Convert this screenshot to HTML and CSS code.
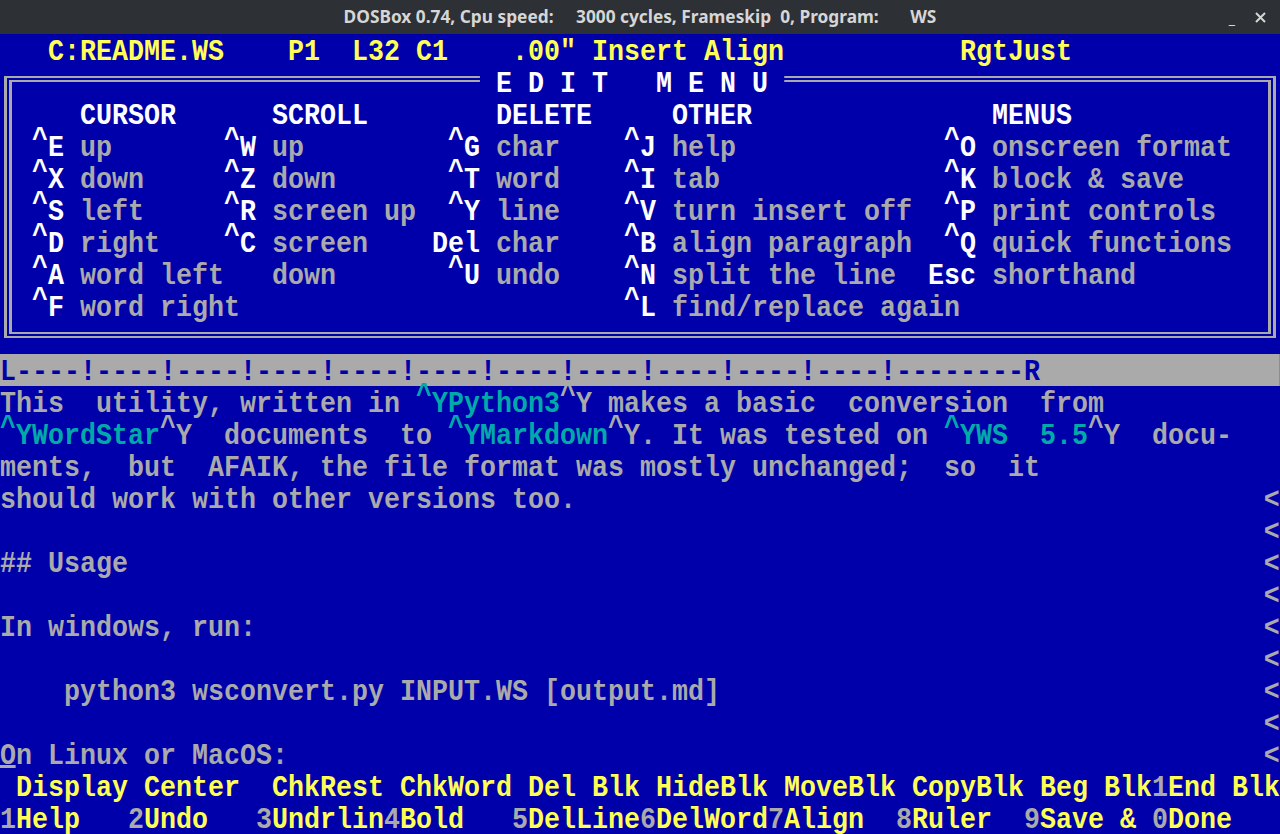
FILE: index.html
```
<!DOCTYPE html>
<html>
<head>
<meta charset="utf-8">
<title>DOSBox - WordStar</title>
<link rel="stylesheet" href="styles.css">
</head>
<body>
<div class="titlebar">
  <div class="tb-side"></div>
  <div class="tb-title">DOSBox 0.74, Cpu speed:     3000 cycles, Frameskip  0, Program:       WS</div>
  <div class="tb-side tb-buttons">
    <span class="tb-min">_</span>
    <svg class="tb-close" width="11" height="11" viewBox="0 0 11 11"><path d="M1 1L10 10M10 1L1 10" stroke="#d6d6d6" stroke-width="2" fill="none"/></svg>
  </div>
</div>
<div class="screen">
  <div class="row yel">   C:README.WS    P1  L32 C1    .00&quot; Insert Align           RgtJust</div>
  <div class="menu">
    <div class="row">                              <span class="ttl"> E D I T   M E N U </span></div>
    <div class="row wht">     CURSOR      SCROLL        DELETE     OTHER               MENUS</div>
    <div class="row">  <span class="ck">E</span> up       <span class="ck">W</span> up         <span class="ck">G</span> char    <span class="ck">J</span> help             <span class="ck">O</span> onscreen format</div>
    <div class="row">  <span class="ck">X</span> down     <span class="ck">Z</span> down       <span class="ck">T</span> word    <span class="ck">I</span> tab              <span class="ck">K</span> block &amp; save</div>
    <div class="row">  <span class="ck">S</span> left     <span class="ck">R</span> screen up  <span class="ck">Y</span> line    <span class="ck">V</span> turn insert off  <span class="ck">P</span> print controls</div>
    <div class="row">  <span class="ck">D</span> right    <span class="ck">C</span> screen    <span class="wht">Del</span> char    <span class="ck">B</span> align paragraph  <span class="ck">Q</span> quick functions</div>
    <div class="row">  <span class="ck">A</span> word left   down       <span class="ck">U</span> undo    <span class="ck">N</span> split the line  <span class="wht">Esc</span> shorthand</div>
    <div class="row">  <span class="ck">F</span> word right                        <span class="ck">L</span> find/replace again</div>
    <div class="row"> </div>
  </div>
  <div class="row ruler">L----!----!----!----!----!----!----!----!----!----!----!--------R</div>
  <div class="row">This  utility, written in <span class="cy"><span class="c">^</span>YPython3</span><span class="c">^</span>Y makes a basic  conversion  from</div>
  <div class="row"><span class="cy"><span class="c">^</span>YWordStar</span><span class="c">^</span>Y  documents  to <span class="cy"><span class="c">^</span>YMarkdown</span><span class="c">^</span>Y. It was tested on <span class="cy"><span class="c">^</span>YWS  5.5</span><span class="c">^</span>Y  docu-</div>
  <div class="row">ments,  but  AFAIK, the file format was mostly unchanged;  so  it</div>
  <div class="row flag"><span>should work with other versions too.</span><span>&lt;</span></div>
  <div class="row flag"><span></span><span>&lt;</span></div>
  <div class="row flag"><span>## Usage</span><span>&lt;</span></div>
  <div class="row flag"><span></span><span>&lt;</span></div>
  <div class="row flag"><span>In windows, run:</span><span>&lt;</span></div>
  <div class="row flag"><span></span><span>&lt;</span></div>
  <div class="row flag"><span>    python3 wsconvert.py INPUT.WS [output.md]</span><span>&lt;</span></div>
  <div class="row flag"><span></span><span>&lt;</span></div>
  <div class="row flag"><span><span class="cur">O</span>n Linux or MacOS:</span><span>&lt;</span></div>
  <div class="row yel"> Display Center  ChkRest ChkWord Del Blk HideBlk MoveBlk CopyBlk Beg Blk<span class="g">1</span>End Blk</div>
  <div class="row yel"><span class="g">1</span>Help   <span class="g">2</span>Undo   <span class="g">3</span>Undrlin<span class="g">4</span>Bold   <span class="g">5</span>DelLine<span class="g">6</span>DelWord<span class="g">7</span>Align  <span class="g">8</span>Ruler  <span class="g">9</span>Save &amp; <span class="g">0</span>Done</div>
</div>
</body>
</html>
```
FILE: styles.css
```
html, body {
  margin: 0;
  padding: 0;
  background: #0000aa;
}

.titlebar {
  height: 34px;
  background: #2d3034;
  color: #d6d6d6;
  font-family: "Noto Sans", "Open Sans", sans-serif;
  font-weight: bold;
  font-size: 17.3px;
  display: grid;
  grid-template-columns: 1fr auto 1fr;
  align-items: center;
}

.tb-title {
  white-space: pre;
  margin-top: -1px;
}

.tb-buttons {
  display: flex;
  justify-content: flex-end;
  align-items: center;
  gap: 20px;
  padding-right: 14px;
}

.tb-min {
  font-size: 15px;
  line-height: 15px;
  margin-top: 2px;
}

.screen {
  width: 1280px;
  height: 800px;
  overflow: hidden;
  background: #0000aa;
  color: #aaaaaa;
  font-family: "Liberation Mono", "DejaVu Sans Mono", monospace;
  font-size: 29px;
  font-weight: bold;
}

.row {
  box-sizing: border-box;
  width: 1392px;
  height: 32px;
  padding-top: 6px;
  line-height: 26px;
  white-space: pre;
  transform: scaleX(0.9194);
  transform-origin: 0 0;
}

.yel { color: #ffff55; }
.wht { color: #ffffff; }
.g { color: #aaaaaa; }
.cy { color: #00aaaa; }

.menu {
  position: relative;
}

.menu::before {
  content: "";
  position: absolute;
  top: 10px;
  left: 4px;
  right: 4px;
  bottom: 16px;
  border-style: double;
  border-color: #aaaaaa;
  border-width: 6px 8px;
}

.ttl {
  background: #0000aa;
  color: #ffffff;
}

.ck {
  color: #ffffff;
}

.ck::before {
  content: "^";
  display: inline-block;
  transform: translateY(-9px);
}

.c {
  display: inline-block;
  transform: translateY(-9px);
}

.ruler {
  background: #aaaaaa;
  color: #0000aa;
}

.flag {
  display: flex;
  justify-content: space-between;
}

.cur {
  display: inline-block;
  height: 26px;
  vertical-align: top;
  background: linear-gradient(to bottom, transparent 21px, #aaaaaa 21px, #aaaaaa 24px, transparent 24px);
}
```
